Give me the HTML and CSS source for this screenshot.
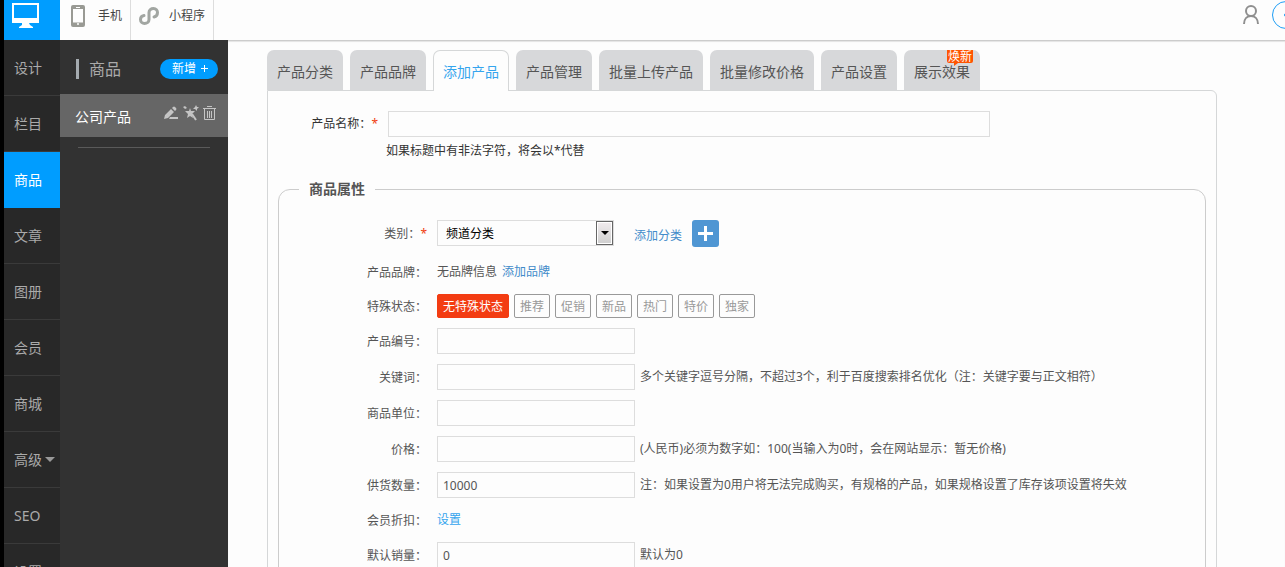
FILE: index.html
```html
<!DOCTYPE html>
<html lang="zh-CN">
<head>
  <meta charset="UTF-8" />
  <meta name="viewport" content="width=device-width, initial-scale=1.0"/>
  <title>添加产品</title>
  <link rel="stylesheet" href="styles.css">
</head>
<body>
<div class="app">

  <!-- Header -->
  <header class="topbar">
    <a class="logo" href="#" aria-label="电脑">
      <svg width="28" height="25" viewBox="0 0 28 25">
        <path d="M0 0h27v20H0zM2 2v13h23V2z" fill="#fff" fill-rule="evenodd"/>
        <path d="M10 20h7l1 2 3 2v1H7v-1l3-2z" fill="#fff"/>
      </svg>
    </a>
    <a class="top-link phone" href="#">
      <svg width="14" height="22" viewBox="0 0 14 22">
        <rect x="1" y="1" width="12" height="20" rx="1" fill="none" stroke="#999a94" stroke-width="2"/>
        <path d="M1 2.500h12M1 19h12" stroke="#999a94" stroke-width="3"/>
        <circle cx="7" cy="19" r="1" fill="#fff"/>
        <path d="M5 2.500h4" stroke="#fff" stroke-width="1"/>
      </svg>
      手机
    </a>
    <a class="top-link mini" href="#">
      <svg width="20" height="20" viewBox="0 0 20 20" fill="none" stroke="#a2a6a2" stroke-width="3" stroke-linecap="round">
        <path d="M5 9.500C2.500 10 1.500 12 1.500 13.500C1.500 16 3.500 17.500 5.500 17.500C8 17.500 10 16 10 13.500V6.500C10 4 12 2.500 14.500 2.500C17 2.500 18.500 4.500 18.500 6.500C18.500 9 17 10.500 15 11"/>
      </svg>
      小程序
    </a>
    <div class="account">
      <svg width="18" height="20" viewBox="0 0 18 20" fill="none" stroke="#8f8f8f" stroke-width="2">
        <circle cx="9" cy="6" r="5"/>
        <path d="M2 19c0-5 3-8 7-8s7 3 7 8"/>
      </svg>
      <a class="round" href="#" aria-label="更多">
        <svg width="5" height="8" viewBox="0 0 5 8" fill="none" stroke="#1d9df5" stroke-width="2"><path d="M4 1L1 4l3 3"/></svg>
      </a>
    </div>
  </header>

  <div class="body">
    <!-- Main menu -->
    <nav class="menu">
      <a href="#">设计</a>
      <a href="#">栏目</a>
      <a href="#" class="active">商品</a>
      <a href="#">文章</a>
      <a href="#">图册</a>
      <a href="#">会员</a>
      <a href="#">商城</a>
      <a href="#">高级<span class="caret"></span></a>
      <a href="#">SEO</a>
      <a href="#">设置</a>
    </nav>

    <!-- Sub menu -->
    <aside class="sidebar">
      <div class="side-head">
        <h2>商品</h2>
        <button type="button">新增
          <svg width="8" height="8" viewBox="0 0 8 8" stroke="#fff"><path d="M0 3.500h7M3.500 0v7"/></svg>
        </button>
      </div>
      <div class="side-item">
        <a href="#">公司产品</a>
        <span class="tools">
          <svg width="16" height="16" viewBox="0 0 16 16" fill="#c4c4c4">
            <path d="M1 14l1-4 6-6 3 3-6 6zM9 3l1-1q1-1 2 0l1 1q1 1 0 2l-1 1zM7 12h8v2H6z"/>
          </svg>
          <svg width="16" height="16" viewBox="0 0 16 16" fill="#c4c4c4">
            <path d="M7 3l1 3h4L9 9l1 4-3-2-3 2 1-4-3-3h4z"/>
            <path d="M9 9l4 6" stroke="#c4c4c4" stroke-width="2"/>
            <path d="M13 0l1 2h2l-2 2v2l-2-2h-2l2-2zM2 1l1 1 1 1-2 1-1-1-1-1z"/>
          </svg>
          <svg width="13" height="16" viewBox="0 0 13 16" fill="none" stroke="#c4c4c4">
            <path d="M0 3.500h13M4 1.500h5M1.500 4v10.500h10V4M4.500 6v7M6.500 6v7M8.500 6v7"/>
          </svg>
        </span>
      </div>
      <hr>
    </aside>

    <!-- Main Content -->
    <main class="content">
      <div class="tabs">
        <a href="#">产品分类</a>
        <a href="#">产品品牌</a>
        <a href="#" class="active">添加产品</a>
        <a href="#">产品管理</a>
        <a href="#">批量上传产品</a>
        <a href="#">批量修改价格</a>
        <a href="#">产品设置</a>
        <a href="#">展示效果<span class="badge">焕新</span></a>
      </div>

      <form class="panel">
        <div class="row name-row">
          <label for="name">产品名称：<em>*</em></label>
          <div class="name-field">
            <input type="text" id="name">
            <p>如果标题中有非法字符，将会以*代替</p>
          </div>
        </div>

        <fieldset>
          <legend>商品属性</legend>

          <div class="row category">
            <label for="category">类别：<em>*</em></label>
            <span class="select">
              <select id="category"><option>频道分类</option></select>
              <span class="arrow"></span>
            </span>
            <a class="add-link" href="#">添加分类</a>
            <button type="button" class="plus" aria-label="添加分类">
              <svg width="15" height="15" viewBox="0 0 15 15" stroke="#fff" stroke-width="3"><path d="M0 7.500h15M7.500 0v15"/></svg>
            </button>
          </div>

          <div class="row brand">
            <span class="label">产品品牌：</span>
            <span>无品牌信息</span>
            <a href="#">添加品牌</a>
          </div>

          <div class="row states">
            <span class="label">特殊状态：</span>
            <button type="button" class="on">无特殊状态</button>
            <button type="button">推荐</button>
            <button type="button">促销</button>
            <button type="button">新品</button>
            <button type="button">热门</button>
            <button type="button">特价</button>
            <button type="button">独家</button>
          </div>

          <div class="row">
            <label for="number">产品编号：</label>
            <input type="text" id="number">
          </div>

          <div class="row">
            <label for="keyword">关键词：</label>
            <input type="text" id="keyword">
            <span>多个关键字逗号分隔，不超过3个，利于百度搜索排名优化（注：关键字要与正文相符）</span>
          </div>

          <div class="row">
            <label for="unit">商品单位：</label>
            <input type="text" id="unit">
          </div>

          <div class="row">
            <label for="price">价格：</label>
            <input type="text" id="price">
            <span>(人民币)必须为数字如：100(当输入为0时，会在网站显示：暂无价格)</span>
          </div>

          <div class="row">
            <label for="stock">供货数量：</label>
            <input type="text" id="stock" value="10000">
            <span>注：如果设置为0用户将无法完成购买，有规格的产品，如果规格设置了库存该项设置将失效</span>
          </div>

          <div class="row">
            <span class="label">会员折扣：</span>
            <a class="set" href="#">设置</a>
          </div>

          <div class="row">
            <label for="sales">默认销量：</label>
            <input type="text" id="sales" value="0">
            <span>默认为0</span>
          </div>
        </fieldset>
      </form>
    </main>
  </div>

</div>
</body>
</html>
```

FILE: styles.css
```css
/* General Styling */
* {
  box-sizing: border-box;
}

body {
  margin: 0;
  background: #fdfdfd;
  color: #555;
  font-family: "Noto Sans", "Noto Sans CJK SC", sans-serif;
  font-size: 12px;
  line-height: 18px;
}

a {
  color: #428bca;
  text-decoration: none;
}

button,
input,
select {
  font: inherit;
}

svg {
  display: block;
  flex: none;
}

.app {
  display: flex;
  flex-direction: column;
  height: 100vh;
  overflow: hidden;
  border-left: 4px solid #000;
}

/* Header */
.topbar {
  display: flex;
  flex: none;
  height: 40px;
  overflow: hidden;
}

.logo {
  width: 56px;
  padding: 3px 8px;
  background: #009dff;
}

.top-link {
  display: flex;
  align-items: center;
  height: 40px;
  padding: 0 8px 8px 11px;
  border-right: 1px solid #ddd;
  color: #444;
}

.phone {
  gap: 13px;
}

.mini {
  gap: 10px;
  padding-left: 8px;
}

.account {
  display: flex;
  gap: 12px;
  margin-left: auto;
  padding-top: 1px;
  margin-right: -15px;
}

.account > svg {
  margin-top: 4px;
}

.round {
  display: flex;
  align-items: center;
  justify-content: center;
  width: 28px;
  height: 28px;
  border: 1px solid #1d9df5;
  border-radius: 50%;
}

.body {
  display: flex;
  flex: 1;
  min-height: 0;
}

/* Main menu */
.menu {
  flex: none;
  width: 56px;
  background: #282828;
}

.menu a {
  display: flex;
  align-items: center;
  height: 56px;
  padding-left: 10px;
  border-bottom: 1px solid #3a3a3a;
  color: #aaa;
  font-size: 14px;
}

.menu .active {
  background: #009dff;
  border-color: #009dff;
  color: #fff;
}

.caret {
  margin-left: 3px;
  border: 5px solid transparent;
  border-top-color: #999;
  border-bottom: 0;
}

/* Sub menu */
.sidebar {
  flex: none;
  width: 168px;
  background: #323232;
}

.side-head {
  display: flex;
  align-items: center;
  justify-content: space-between;
  height: 54px;
  padding: 4px 10px 0 16px;
}

.side-head h2 {
  margin: 0;
  padding-left: 10px;
  border-left: 3px solid #a5abb0;
  color: #aaa;
  font-size: 16px;
  font-weight: normal;
  line-height: 20px;
}

.side-head button {
  display: flex;
  align-items: center;
  justify-content: center;
  gap: 5px;
  width: 58px;
  height: 20px;
  padding: 0 0 0 3px;
  border: 0;
  border-radius: 10px;
  background: #009dff;
  color: #fff;
}

.side-item {
  display: flex;
  justify-content: space-between;
  height: 43px;
  padding: 11px 12px 0 15px;
  background: #666;
}

.side-item a {
  color: #fff;
  font-size: 14px;
  line-height: 24px;
}

.tools {
  display: flex;
  gap: 4px;
}

.sidebar hr {
  margin: 10px 18px;
  border: 0;
  border-top: 1px solid #5a5a5a;
}

/* Content */
.content {
  flex: 1;
  min-width: 0;
  padding: 9px 68px 0 39px;
  border-top: 1px solid #ccc;
  box-shadow: inset 0 1px 1px #e4e4e4;
}

.tabs {
  display: flex;
  gap: 7px;
}

.tabs a {
  position: relative;
  height: 40px;
  padding: 0 10px;
  border-radius: 7px 7px 0 0;
  background: #d7d8da;
  color: #555;
  font-size: 14px;
  line-height: 43px;
  white-space: nowrap;
}

.tabs .active {
  height: 41px;
  margin-bottom: -1px;
  padding: 0 9px;
  border: 1px solid #d5d7d8;
  border-bottom: 0;
  background: #fdfdfd;
  color: #35a5ee;
  line-height: 41px;
}

.tabs .badge {
  position: absolute;
  top: 0;
  right: 7px;
  width: 26px;
  height: 13px;
  border-radius: 0 0 2px 2px;
  background: #ff5400;
  color: #fff;
  font-size: 12px;
  line-height: 13px;
  text-align: center;
}

.badge::after {
  content: "";
  position: absolute;
  top: 13px;
  left: 7px;
  border-top: 3px solid #ff5400;
  border-right: 4px solid transparent;
}

.panel {
  padding: 20px 10px 0;
  border: 1px solid #d5d7d8;
  border-radius: 0 6px 0 0;
}

/* Form rows */
.row {
  display: flex;
  align-items: center;
  gap: 5px;
  min-height: 24px;
  margin-bottom: 10px;
}

.row label,
.row .label {
  flex: none;
  width: 148px;
  margin-right: 5px;
  padding-top: 2px;
  text-align: right;
}

.row em {
  color: #f03c10;
  font-style: normal;
}

.row input {
  width: 198px;
  height: 26px;
  padding: 0 5px;
  border: 1px solid #ddd;
  background: #fdfdfd;
  color: #555;
}

.row.name-row {
  align-items: flex-start;
  margin-bottom: 20px;
  color: #333;
}

.name-row label {
  width: 100px;
  padding-top: 0;
  line-height: 26px;
}

.name-row input {
  display: block;
  width: 602px;
}

.name-row p {
  margin: 5px 0 0 -2px;
}

fieldset {
  min-width: 0;
  margin: 0;
  padding: 22px 0 0;
  border: 1px solid #ccc;
  border-radius: 12px 12px 0 0;
}

legend {
  margin-left: 20px;
  padding: 0 10px;
  font-size: 14px;
  font-weight: bold;
}

.category {
  align-items: flex-start;
  height: 30px;
  line-height: 26px;
}

.category label {
  padding-top: 1px;
}

.select {
  position: relative;
}

.select select {
  display: block;
  width: 177px;
  height: 26px;
  padding: 0 8px;
  border: 1px solid #ddd;
  border-radius: 0;
  background: #fdfdfd;
  color: #000;
  appearance: none;
}

.arrow {
  position: absolute;
  top: 1px;
  right: 1px;
  display: flex;
  align-items: center;
  justify-content: center;
  width: 17px;
  height: 24px;
  border: 1px solid #666;
  background: linear-gradient(#f1ecee, #cfcfcf);
  box-shadow: inset 0 0 0 1px #fff;
  pointer-events: none;
}

.arrow::after {
  content: "";
  border: 4px solid transparent;
  border-top-color: #000;
  border-bottom: 0;
}

.category .add-link {
  margin: 0 5px 0 15px;
  line-height: 32px;
}

.plus {
  display: flex;
  align-items: center;
  justify-content: center;
  width: 27px;
  height: 27px;
  padding: 0;
  border: 0;
  border-radius: 3px;
  background: #4f96d3;
}

.states button {
  height: 24px;
  padding: 1px 5px 0;
  border: 1px solid #999;
  border-radius: 2px;
  background: #fdfdfd;
  color: #999;
}

.states .on {
  border-color: #f33c12;
  background: #f33c12;
  color: #fff;
}

.row .set {
  color: #35a5ee;
}
```
